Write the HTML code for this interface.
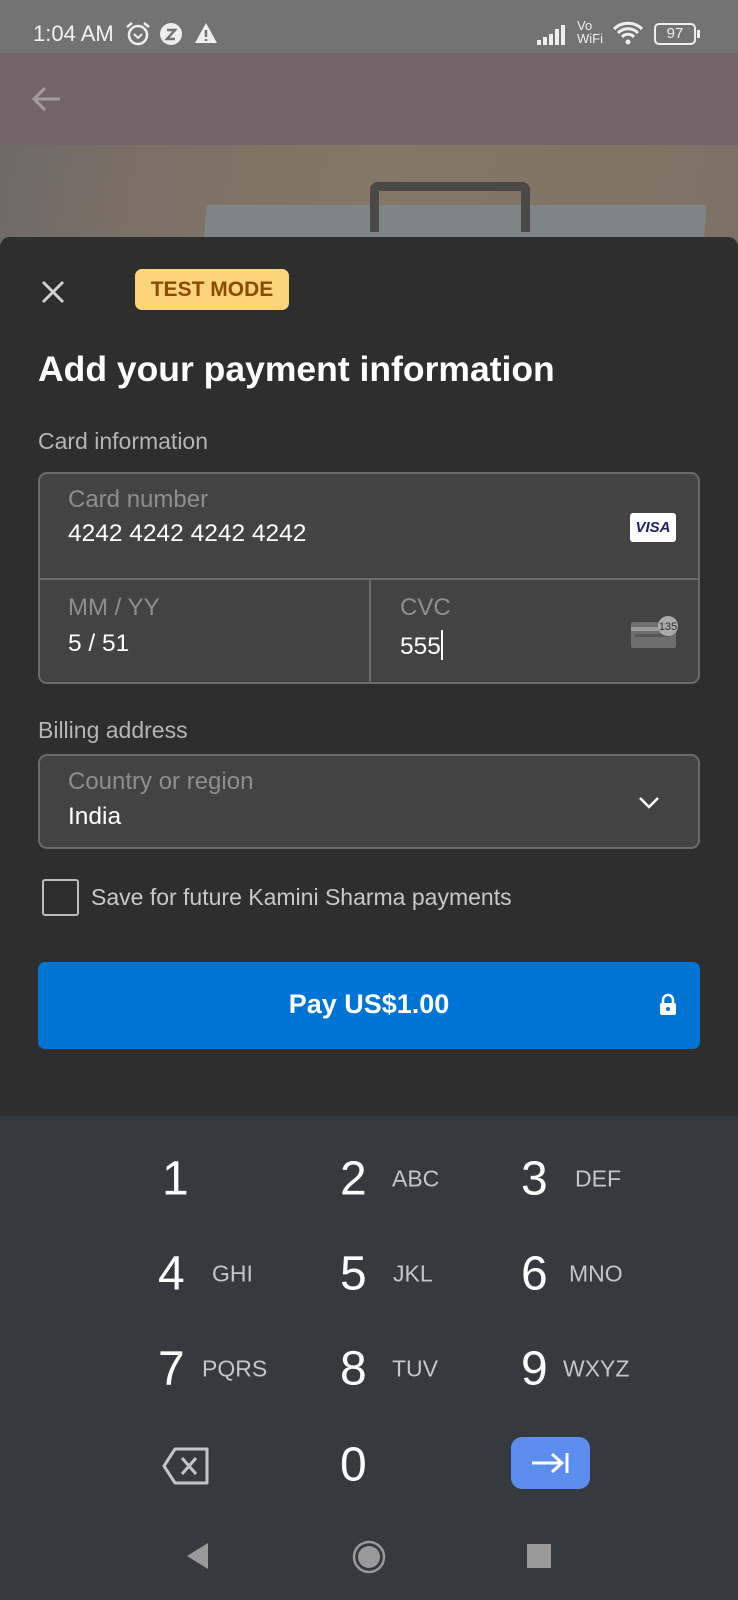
<!DOCTYPE html>
<html><head><meta charset="utf-8"><style>
*{margin:0;padding:0;box-sizing:border-box}
body{width:738px;height:1600px;position:relative;overflow:hidden;background:#2e2e2e;font-family:"Liberation Sans",sans-serif;}
.a{position:absolute;white-space:nowrap}
.sb{left:0;top:0;width:738px;height:53px;background:#737373}
.app{left:0;top:53px;width:738px;height:92px;background:#71656a}
.photo{left:0;top:145px;width:738px;height:100px;background:linear-gradient(100deg,#6f6a66 0,#7b7066 20%,#857766 50%,#7d7266 100%)}
.sheet{left:0;top:237px;width:738px;height:890px;background:#2e2e2e;border-radius:10px 10px 0 0}
.box{background:#434343;border:2px solid #6a6a6a}
.lbl{color:#8e8e8e;font-size:24px}
.val{color:#fff;font-size:24.5px}
.kb{left:0;top:1116px;width:738px;height:484px;background:#363a3e}
.d{color:#fff;font-size:48px;transform:translateY(-50%)}
.l{color:#c3c5c7;font-size:23px;transform:translateY(-50%)}
</style></head><body>
<div class="a sb"></div>
<div class="a" style="left:33px;top:21px;color:#f2f2f2;font-size:22px">1:04 AM</div>
<svg class="a" style="left:124px;top:20px" width="28" height="28" viewBox="0 0 28 28"><circle cx="14" cy="15" r="9" fill="none" stroke="#eee" stroke-width="2.5"/><path d="M10 14l4 4 4-4" stroke="#eee" stroke-width="2" fill="none"/><path d="M3 7l5-4M25 7l-5-4" stroke="#eee" stroke-width="2.5"/></svg>
<svg class="a" style="left:159px;top:22px" width="24" height="24"><circle cx="12" cy="12" r="11" fill="#eee"/><path d="M8 8h8l-8 9h8" stroke="#737373" stroke-width="2.5" fill="none"/></svg>
<svg class="a" style="left:194px;top:22px" width="24" height="22"><path d="M12 1L23 21H1z" fill="#eee"/><path d="M12 8v7M12 17v2" stroke="#737373" stroke-width="2.5"/></svg>
<svg class="a" style="left:537px;top:24px" width="36" height="22"><rect x="0" y="16" width="4" height="5" fill="#eee"/><rect x="6" y="13" width="4" height="8" fill="#eee"/><rect x="12" y="10" width="4" height="11" fill="#eee"/><rect x="18" y="5" width="4" height="16" fill="#eee"/><rect x="24" y="1" width="4" height="20" fill="#eee"/></svg>
<div class="a" style="left:577px;top:19px;color:#eee;font-size:13px;line-height:13px">Vo<br>WiFi</div>
<svg class="a" style="left:612px;top:20px" width="32" height="26" viewBox="0 0 32 26"><path d="M2 9a20 20 0 0 1 28 0M6 13a14 14 0 0 1 20 0M10 17a8 8 0 0 1 12 0" stroke="#eee" stroke-width="3" fill="none"/><circle cx="16" cy="22" r="2.5" fill="#eee"/></svg>
<div class="a" style="left:654px;top:23px;width:42px;height:22px;border:2px solid #eee;border-radius:5px;color:#eee;font-size:15px;text-align:center;line-height:18px"><div style="position:absolute;left:2px;top:2px;width:34px;height:14px;background:#999;z-index:-1"></div>97</div>
<div class="a" style="left:697px;top:30px;width:3px;height:8px;background:#eee"></div>
<div class="a app"></div>
<svg class="a" style="left:30px;top:85px" width="32" height="28"><path d="M30 14H4M15 3L4 14l11 11" stroke="#a59ba0" stroke-width="3" fill="none"/></svg>
<div class="a photo"></div>
<div class="a" style="left:205px;top:205px;width:500px;height:40px;background:#7d8587;transform:skewX(-4deg)"></div>
<div class="a" style="left:370px;top:182px;width:160px;height:50px;border:9px solid #4b4947;border-bottom:none;border-radius:8px 8px 0 0"></div>
<div class="a sheet"></div>
<svg class="a" style="left:41px;top:280px" width="24" height="24"><path d="M2 2l20 20M22 2L2 22" stroke="#d0d0d0" stroke-width="3"/></svg>
<div class="a" style="left:135px;top:269px;width:154px;height:41px;background:#fcd57a;border-radius:7px;color:#8a4a00;font-weight:bold;font-size:21px;line-height:41px;text-align:center">TEST MODE</div>
<div class="a" style="left:38px;top:349px;color:#fff;font-weight:bold;font-size:35.5px">Add your payment information</div>
<div class="a" style="left:38px;top:428px;color:#b5b5b5;font-size:23px">Card information</div>
<div class="a box" style="left:38px;top:472px;width:662px;height:212px;border-radius:9px;overflow:hidden">
 <div style="position:absolute;left:0;top:104px;width:100%;height:2px;background:#6a6a6a"></div>
 <div style="position:absolute;left:329px;top:104px;width:2px;height:110px;background:#6a6a6a"></div>
</div>
<div class="a lbl" style="left:68px;top:486px">Card number</div>
<div class="a val" style="left:68px;top:520px">4242 4242 4242 4242</div>
<div class="a" style="left:630px;top:513px;width:46px;height:29px;background:#fff;border-radius:3px;color:#1a1f71;font-weight:bold;font-style:italic;font-size:15px;line-height:29px;text-align:center">VISA</div>
<div class="a lbl" style="left:68px;top:594px">MM / YY</div>
<div class="a val" style="left:68px;top:630px">5 / 51</div>
<div class="a lbl" style="left:400px;top:594px">CVC</div>
<div class="a val" style="left:400px;top:630px">555<span style="display:inline-block;width:2px;height:30px;background:#fff;vertical-align:-6px"></span></div>
<svg class="a" style="left:630px;top:614px" width="48" height="36"><rect x="1" y="8" width="45" height="26" rx="2" fill="#6e6e6e"/><rect x="1" y="13" width="45" height="4" fill="#9a9a9a"/><rect x="5" y="20" width="34" height="3" fill="#555"/><circle cx="38" cy="12" r="10" fill="#aaa"/><text x="38" y="16" font-size="11" text-anchor="middle" fill="#333" font-family="Liberation Sans">135</text></svg>
<div class="a" style="left:38px;top:717px;color:#b5b5b5;font-size:23px">Billing address</div>
<div class="a box" style="left:38px;top:754px;width:662px;height:95px;border-radius:9px"></div>
<div class="a lbl" style="left:68px;top:768px">Country or region</div>
<div class="a val" style="left:68px;top:803px">India</div>
<svg class="a" style="left:638px;top:796px" width="22" height="14"><path d="M2 2l9 9 9-9" stroke="#fff" stroke-width="2.5" fill="none"/></svg>
<div class="a" style="left:42px;top:879px;width:37px;height:37px;border:2.5px solid #bbb;border-radius:3px"></div>
<div class="a" style="left:91px;top:884px;color:#c8c8c8;font-size:23px">Save for future Kamini Sharma payments</div>
<div class="a" style="left:38px;top:962px;width:662px;height:87px;background:#0074d4;border-radius:7px"></div>
<div class="a" style="left:0;top:989px;width:738px;text-align:center;color:#fff;font-size:27px;font-weight:bold">Pay US$1.00</div>
<svg class="a" style="left:658px;top:993px" width="20" height="24"><path d="M5 11V7a5 5 0 0 1 10 0v4" stroke="#fff" stroke-width="2.5" fill="none"/><rect x="2" y="10" width="16" height="12" rx="2" fill="#fff"/><circle cx="10" cy="16" r="2" fill="#0074d4"/></svg>
<div class="a kb"></div>
<div class="a d" style="left:162px;top:1179px">1</div>
<div class="a d" style="left:340px;top:1179px">2</div><div class="a l" style="left:392px;top:1179px">ABC</div>
<div class="a d" style="left:521px;top:1179px">3</div><div class="a l" style="left:575px;top:1179px">DEF</div>
<div class="a d" style="left:158px;top:1274px">4</div><div class="a l" style="left:212px;top:1274px">GHI</div>
<div class="a d" style="left:340px;top:1274px">5</div><div class="a l" style="left:393px;top:1274px">JKL</div>
<div class="a d" style="left:521px;top:1274px">6</div><div class="a l" style="left:569px;top:1274px">MNO</div>
<div class="a d" style="left:158px;top:1369px">7</div><div class="a l" style="left:202px;top:1369px">PQRS</div>
<div class="a d" style="left:340px;top:1369px">8</div><div class="a l" style="left:392px;top:1369px">TUV</div>
<div class="a d" style="left:521px;top:1369px">9</div><div class="a l" style="left:563px;top:1369px">WXYZ</div>
<div class="a d" style="left:340px;top:1465px">0</div>
<svg class="a" style="left:161px;top:1446px" width="50" height="40"><path d="M14 3h32v34H14L3 20z" stroke="#c3c5c7" stroke-width="3" fill="none" stroke-linejoin="round"/><path d="M21 12l14 16M35 12L21 28" stroke="#c3c5c7" stroke-width="3"/></svg>
<div class="a" style="left:511px;top:1437px;width:79px;height:52px;background:#5b8def;border-radius:11px"></div>
<svg class="a" style="left:530px;top:1450px" width="42" height="26"><path d="M2 13h30M22 4l10 9-10 9M37 3v20" stroke="#fff" stroke-width="3" fill="none"/></svg>
<svg class="a" style="left:184px;top:1541px" width="26" height="30"><path d="M24 2v26L3 15z" fill="#9a9a9a"/></svg>
<svg class="a" style="left:351px;top:1539px" width="36" height="36"><circle cx="18" cy="18" r="15" stroke="#9a9a9a" stroke-width="2.5" fill="none"/><circle cx="18" cy="18" r="11" fill="#9a9a9a"/></svg>
<div class="a" style="left:527px;top:1544px;width:24px;height:24px;background:#9a9a9a"></div>
</body></html>
